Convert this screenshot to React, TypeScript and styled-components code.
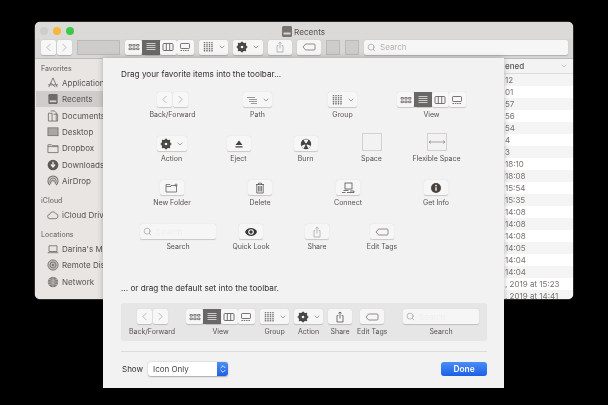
import type { ReactNode } from 'react';
import { ChevronDown, ChevronLeft, ChevronRight, ChevronsUpDown, Search as SearchGlyph } from 'lucide-react';
import styled, { createGlobalStyle } from 'styled-components';

const GlobalStyle = createGlobalStyle`
	html, body {
		margin: 0;
		background: #000;
	}
	body {
		font-family: Inter, "Liberation Sans", sans-serif;
	}
`;

const ink = '#55524f';

const Glyph = ({ size = 12, children }: { size?: number; children: ReactNode }) => (
	<svg width={size} height={size} viewBox="0 0 12 12" fill="none" stroke={ink} strokeWidth="0.8">
		{children}
	</svg>
);

const IconsGrid = () => (
	<Glyph>
		<path d="M1 3.5h2.4v1.6H1zM4.8 3.5h2.4v1.6H4.8zM8.6 3.5H11v1.6H8.6zM1 7h2.4v1.6H1zM4.8 7h2.4v1.6H4.8zM8.6 7H11v1.6H8.6z" strokeWidth="0.7" />
	</Glyph>
);
const ListLines = ({ light }: { light?: boolean }) => (
	<svg width="12" height="12" viewBox="0 0 12 12" fill="none" stroke={light ? '#e6e6e6' : ink} strokeWidth="0.8">
		<path d="M1.5 2.5h9M1.5 4.5h9M1.5 6.5h9M1.5 8.5h9" />
	</svg>
);
const ColumnsIcon = () => (
	<Glyph>
		<rect x="1" y="2.5" width="10" height="7" rx="1" />
		<path d="M4.3 2.5v7M7.7 2.5v7" />
	</Glyph>
);
const GalleryIcon = () => (
	<Glyph>
		<rect x="1.5" y="2.5" width="9" height="5" rx="0.8" />
		<path d="M1.5 9.5h9" strokeDasharray="1.5 0.8" />
	</Glyph>
);
const GroupIcon = () => (
	<svg width="12" height="12" viewBox="0 0 12 12" fill="none" stroke="#77736f" strokeWidth="1.4" strokeDasharray="1.3 0.6">
		<path d="M2.5 1v10M5 1v10M7.5 1v10M10 1v10" />
	</svg>
);
const GearIcon = () => (
	<svg width="12" height="12" viewBox="0 0 12 12">
		<circle cx="6" cy="6" r="3.6" fill="none" stroke="#45423f" strokeWidth="2" />
		<path d="M6 .7v10.6M.7 6h10.6M2.2 2.2l7.6 7.6M9.8 2.2l-7.6 7.6" stroke="#45423f" strokeWidth="1.7" />
		<circle cx="6" cy="6" r="1.3" fill="#f6f6f6" />
	</svg>
);
const ShareIcon = ({ faint }: { faint?: boolean }) => (
	<svg width="12" height="12" viewBox="0 0 12 12" fill="none" stroke={faint ? '#aaa8a6' : ink} strokeWidth="0.8">
		<path d="M4.3 4.5H3v6.5h6V4.5H7.7M6 7.5V1M4.4 2.5 6 1l1.6 1.5" />
	</svg>
);
const TagIcon = () => (
	<svg width="14" height="10" viewBox="0 0 14 10" fill="none" stroke="#77736f" strokeWidth="0.8">
		<path d="M1 5l2.6-3H12a1 1 0 0 1 1 1v4a1 1 0 0 1-1 1H3.6z" />
	</svg>
);
const EjectIcon = () => (
	<svg width="12" height="12" viewBox="0 0 12 12" fill="#45423f">
		<path d="M6 2.5 9.5 7h-7zM2.5 8.2h7v1.2h-7z" />
	</svg>
);
const BurnIcon = () => (
	<svg width="12" height="12" viewBox="0 0 12 12">
		<circle cx="6" cy="6" r="5.2" fill="#45423f" />
		<path d="M6 6 3.3 1.6h5.4zM6 6 1 8l2.6 2.8zM6 6l5 2-2.6 2.8z" fill="#f6f6f6" />
		<circle cx="6" cy="6" r="1" fill="#45423f" />
	</svg>
);
const NewFolderIcon = () => (
	<svg width="14" height="12" viewBox="0 0 14 12" fill="none" stroke="#66625f" strokeWidth="0.8">
		<path d="M1 2.5h4l1 1h5.5v6.5H1zM1 4.5h5M11 1.5v3M9.5 3h3" />
	</svg>
);
const TrashIcon = () => (
	<Glyph>
		<path d="M2 2.5h8M4.5 2.5V1.2h3v1.3M2.8 2.5V11h6.4V2.5M4.6 4v5.5M6 4v5.5M7.4 4v5.5" />
	</Glyph>
);
const ConnectIcon = () => (
	<svg width="14" height="12" viewBox="0 0 14 12" fill="none" stroke="#55524f" strokeWidth="0.8">
		<rect x="4" y="1" width="7" height="6" />
		<path d="M2.5 8.5h5M1 10.5h3.5M9 9h4v1.5H6" />
	</svg>
);
const InfoIcon = () => (
	<svg width="12" height="12" viewBox="0 0 12 12">
		<circle cx="6" cy="6" r="5" fill="#45423f" />
		<path d="M5.3 5.2h1.4v3.6H5.3z" fill="#f6f6f6" />
		<circle cx="6" cy="3.6" r="0.9" fill="#f6f6f6" />
	</svg>
);
const EyeIcon = () => (
	<svg width="14" height="10" viewBox="0 0 14 10">
		<path d="M1 5c2-5.3 10-5.3 12 0-2 5.3-10 5.3-12 0z" fill="#3a3836" />
		<circle cx="7" cy="5" r="2.8" fill="#f6f6f6" />
		<circle cx="7" cy="5" r="1.7" fill="#3a3836" />
	</svg>
);
const PathIcon = () => (
	<svg width="12" height="12" viewBox="0 0 12 12" fill="none" stroke="#77736f" strokeWidth="0.7">
		<path d="M1 3.5h8M3 5.5h8M3 7.5h8M5 9.5h6" />
	</svg>
);

const sideStroke = { fill: 'none', stroke: '#6e6b68', strokeWidth: 0.9 };
const SideIcon = ({ children }: { children: ReactNode }) => (
	<SideIconSvg width="12" height="12" viewBox="0 0 13 13">
		{children}
	</SideIconSvg>
);

const sidebarIcons: Record<string, ReactNode> = {
	apps: <path d="M6.5 1 2 11M6.5 1l4.5 10M1 8.5h11M4 6l5 5" {...sideStroke} />,
	recents: (
		<>
			<rect x="1.5" y="1" width="10" height="11" rx="1.5" fill="#6e6b68" />
			<rect x="3" y="8" width="7" height="2" fill="#d2d0ce" />
		</>
	),
	documents: <path d="M1.5 3.5h4v8.5h-4zM4 1h4l2 2v9H5.5M7 4.5h4.5V12H10" {...sideStroke} />,
	desktop: (
		<>
			<rect x="1" y="2" width="11" height="8.5" fill="#a9a6a4" stroke="#6e6b68" strokeWidth="0.8" />
		</>
	),
	folder: <path d="M1 3h4l1 1h6v7.5H1zM1 5h11" {...sideStroke} />,
	downloads: (
		<>
			<circle cx="6.5" cy="6.5" r="5.8" fill="#5c5956" />
			<path d="M6.5 3v5M4.3 6l2.2 2.6L8.7 6" fill="none" stroke="#f0eeec" strokeWidth="1.4" />
		</>
	),
	airdrop: <path d="M3.3 11a5.5 5.5 0 1 1 6.4 0M4.4 9.3a3.4 3.4 0 1 1 4.2 0M5.6 7.8a1.4 1.4 0 1 1 1.8 0" {...sideStroke} strokeWidth={1.1} />,
	cloud: <path d="M3.2 10.5a2.4 2.4 0 0 1-.2-4.8 3.4 3.4 0 0 1 6.4-.7 2.8 2.8 0 0 1 .4 5.5z" {...sideStroke} />,
	laptop: <path d="M2.2 3h8.6v6.2H2.2zM.8 10.5h11.4" {...sideStroke} />,
	disc: (
		<>
			<circle cx="6.5" cy="6.5" r="5.6" fill="#bdbab8" stroke="#6e6b68" strokeWidth="0.8" />
			<circle cx="6.5" cy="6.5" r="3.2" {...sideStroke} />
			<circle cx="6.5" cy="6.5" r="1.2" fill="#6e6b68" />
		</>
	),
	globe: (
		<>
			<circle cx="6.5" cy="6.5" r="5.6" fill="#807d7a" />
			<path d="M6.5 1v11M1 6.5h11M2 3.5c3 1.4 6 1.4 9 0M2 9.5c3-1.4 6-1.4 9 0" fill="none" stroke="#dcdad8" strokeWidth="0.6" />
		</>
	),
};

type TSideEntry = { kind: 'section' | 'item'; label: string; icon?: string; selected?: boolean };

const sidebar: TSideEntry[] = [
	{ kind: 'section', label: 'Favorites' },
	{ kind: 'item', label: 'Applications', icon: 'apps' },
	{ kind: 'item', label: 'Recents', icon: 'recents', selected: true },
	{ kind: 'item', label: 'Documents', icon: 'documents' },
	{ kind: 'item', label: 'Desktop', icon: 'desktop' },
	{ kind: 'item', label: 'Dropbox', icon: 'folder' },
	{ kind: 'item', label: 'Downloads', icon: 'downloads' },
	{ kind: 'item', label: 'AirDrop', icon: 'airdrop' },
	{ kind: 'section', label: 'iCloud' },
	{ kind: 'item', label: 'iCloud Drive', icon: 'cloud' },
	{ kind: 'section', label: 'Locations' },
	{ kind: 'item', label: "Darina's Mac", icon: 'laptop' },
	{ kind: 'item', label: 'Remote Disc', icon: 'disc' },
	{ kind: 'item', label: 'Network', icon: 'globe' },
];

const dateRows = ['12', '01', '57', '56', '54', '4', '3', '18:10', '18:08', '15:54', '15:35', '14:08', '14:08', '14:08', '14:05', '14:04', '14:04', ', 2019 at 15:23', ', 2019 at 14:41'];

const BackForward = () => (
	<Split $gap={1}>
		<Segment $width={15}>
			<ChevronLeft size={13} strokeWidth={1} color="#8a8785" />
		</Segment>
		<Segment $width={15}>
			<ChevronRight size={13} strokeWidth={1} color="#8a8785" />
		</Segment>
	</Split>
);

const ViewSwitch = () => (
	<Split $gap={0}>
		<Segment $width={17.25}>
			<IconsGrid />
		</Segment>
		<Segment $width={17.25} $active>
			<ListLines light />
		</Segment>
		<Segment $width={17.25}>
			<ColumnsIcon />
		</Segment>
		<Segment $width={17.25}>
			<GalleryIcon />
		</Segment>
	</Split>
);

const Menu = ({ width, children }: { width: number; children: ReactNode }) => (
	<ToolButton $width={width}>
		{children}
		<ChevronDown size={8} strokeWidth={1.6} color="#55524f" />
	</ToolButton>
);

const SearchField = ({ width, faint }: { width?: number; faint?: boolean }) => (
	<SearchBox $width={width}>
		<SearchGlyph size={9} strokeWidth={1.2} color="#77736f" />
		<SearchText $faint={faint}>Search</SearchText>
	</SearchBox>
);

const PaletteItem = ({ label, children }: { label: string; children: ReactNode }) => (
	<Item>
		<ItemSlot>{children}</ItemSlot>
		<ItemLabel>{label}</ItemLabel>
	</Item>
);

const Icon = ({ width = 24, children }: { width?: number; children: ReactNode }) => (
	<ToolButton $width={width}>{children}</ToolButton>
);

export default function App() {
	return (
		<Stage>
			<GlobalStyle />
			<Window>
				<TitleBar>
					<Lights>
						<Light $color="#cfcdcb" />
						<Light $color="#f5b83d" />
						<Light $color="#3ec84a" />
					</Lights>
					<Title>
						<svg width="10" height="11" viewBox="0 0 10 11">
							<rect width="10" height="11" rx="1.5" fill="#77736f" />
							<rect x="1.5" y="6.5" width="7" height="2" fill="#d8d6d4" />
						</svg>
						<span>Recents</span>
					</Title>
				</TitleBar>
				<Toolbar>
					<BackForward />
					<PlaceholderButton $width={43} />
					<ViewSwitch />
					<Menu width={29}>
						<GroupIcon />
					</Menu>
					<Menu width={30}>
						<GearIcon />
					</Menu>
					<Icon>
						<ShareIcon faint />
					</Icon>
					<Icon>
						<TagIcon />
					</Icon>
					<PlaceholderButton $width={14} />
					<PlaceholderButton $width={14} />
					<SearchField />
				</Toolbar>
				<Body>
					<Sidebar>
						{sidebar.map((entry) =>
							entry.kind === 'section' ? (
								<SectionLabel key={entry.label}>{entry.label}</SectionLabel>
							) : (
								<SideRow key={entry.label} $selected={entry.selected}>
									<SideIcon>{sidebarIcons[entry.icon as string]}</SideIcon>
									<span>{entry.label}</span>
								</SideRow>
							),
						)}
					</Sidebar>
					<ListPane>
						<ListHeader>
							<span>ened</span>
							<ChevronDown size={8} strokeWidth={1.2} color="#8a8785" />
						</ListHeader>
						{dateRows.map((text, index) => (
							<ListRow key={index} $striped={index % 2 === 0}>
								{text}
							</ListRow>
						))}
					</ListPane>
				</Body>
			</Window>

			<Sheet>
				<Heading>Drag your favorite items into the toolbar...</Heading>
				<Palette>
					<PaletteRow $columns="85px 85px 85px 93px" $left={27}>
						<PaletteItem label="Back/Forward">
							<BackForward />
						</PaletteItem>
						<PaletteItem label="Path">
							<Menu width={29}>
								<PathIcon />
							</Menu>
						</PaletteItem>
						<PaletteItem label="Group">
							<Menu width={29}>
								<GroupIcon />
							</Menu>
						</PaletteItem>
						<PaletteItem label="View">
							<ViewSwitch />
						</PaletteItem>
					</PaletteRow>
					<PaletteRow $columns="67px 67px 67px 65px 65px" $left={35}>
						<PaletteItem label="Action">
							<Menu width={30}>
								<GearIcon />
							</Menu>
						</PaletteItem>
						<PaletteItem label="Eject">
							<Icon>
								<EjectIcon />
							</Icon>
						</PaletteItem>
						<PaletteItem label="Burn">
							<Icon>
								<BurnIcon />
							</Icon>
						</PaletteItem>
						<PaletteItem label="Space">
							<SpaceBox />
						</PaletteItem>
						<PaletteItem label="Flexible Space">
							<SpaceBox>
								<svg width="16" height="6" viewBox="0 0 16 6" fill="none" stroke="#8a8785" strokeWidth="0.7">
									<path d="M0 3h16M0 3l2-1.5M0 3l2 1.5M16 3l-2-1.5M16 3l-2 1.5" />
								</svg>
							</SpaceBox>
						</PaletteItem>
					</PaletteRow>
					<PaletteRow $columns="88px 88px 88px 88px" $left={25}>
						<PaletteItem label="New Folder">
							<Icon>
								<NewFolderIcon />
							</Icon>
						</PaletteItem>
						<PaletteItem label="Delete">
							<Icon>
								<TrashIcon />
							</Icon>
						</PaletteItem>
						<PaletteItem label="Connect">
							<Icon>
								<ConnectIcon />
							</Icon>
						</PaletteItem>
						<PaletteItem label="Get Info">
							<Icon>
								<InfoIcon />
							</Icon>
						</PaletteItem>
					</PaletteRow>
					<PaletteRow $columns="76px 70px 62px 68px" $left={37}>
						<PaletteItem label="Search">
							<SearchField width={76} faint />
						</PaletteItem>
						<PaletteItem label="Quick Look">
							<Icon>
								<EyeIcon />
							</Icon>
						</PaletteItem>
						<PaletteItem label="Share">
							<Icon>
								<ShareIcon faint />
							</Icon>
						</PaletteItem>
						<PaletteItem label="Edit Tags">
							<Icon>
								<TagIcon />
							</Icon>
						</PaletteItem>
					</PaletteRow>
				</Palette>

				<Heading>... or drag the default set into the toolbar.</Heading>
				<DefaultSet>
					<PaletteItem label="Back/Forward">
						<BackForward />
					</PaletteItem>
					<PaletteItem label="View">
						<ViewSwitch />
					</PaletteItem>
					<PaletteItem label="Group">
						<Menu width={29}>
							<GroupIcon />
						</Menu>
					</PaletteItem>
					<PaletteItem label="Action">
						<Menu width={29}>
							<GearIcon />
						</Menu>
					</PaletteItem>
					<PaletteItem label="Share">
						<Icon>
							<ShareIcon />
						</Icon>
					</PaletteItem>
					<PaletteItem label="Edit Tags">
						<Icon>
							<TagIcon />
						</Icon>
					</PaletteItem>
					<SearchSlot>
						<PaletteItem label="Search">
							<SearchField width={76} faint />
						</PaletteItem>
					</SearchSlot>
				</DefaultSet>
				<Divider />
				<Footer>
					<ShowLabel>Show</ShowLabel>
					<Select>
						<span>Icon Only</span>
						<SelectArrows>
							<ChevronsUpDown size={10} strokeWidth={2} color="#fff" />
						</SelectArrows>
					</Select>
					<DoneButton>Done</DoneButton>
				</Footer>
			</Sheet>
		</Stage>
	);
}

const Stage = styled.div`
	position: relative;
	width: 608px;
	height: 405px;
	padding: 22px 0 0 35px;
	box-sizing: border-box;
	background: #000;
	overflow: hidden;
	color: #3c3a38;
	filter: blur(0.35px);
`;

const Window = styled.div`
	display: flex;
	flex-direction: column;
	width: 538px;
	height: 277px;
	border-radius: 5px;
	overflow: hidden;
	background: #fff;
	box-shadow: 0 0 0 0.5px #555;
`;

const TitleBar = styled.div`
	position: relative;
	display: flex;
	align-items: center;
	flex-shrink: 0;
	height: 16px;
	padding: 1px 6px 0 5px;
	background: #dbdad9;
`;

const Lights = styled.div`
	display: flex;
	gap: 5px;
`;

const Light = styled.div<{ $color: string }>`
	width: 8px;
	height: 8px;
	border-radius: 50%;
	background: ${(p) => p.$color};
`;

const Title = styled.div`
	display: flex;
	align-items: center;
	gap: 2px;
	margin-left: 208px;
	padding-top: 1px;
	font-size: 8.2px;
	color: #55524f;
`;

const Toolbar = styled.div`
	display: flex;
	align-items: center;
	flex-shrink: 0;
	gap: 5px;
	height: 20px;
	padding: 0 5px 3px 6px;
	box-sizing: border-box;
	background: #d8d7d6;
	border-bottom: 1px solid #bdbcbb;
`;

const Split = styled.div<{ $gap: number }>`
	display: flex;
	flex-shrink: 0;
	gap: ${(p) => p.$gap}px;
	height: 15px;
`;

const Segment = styled.div<{ $width: number; $active?: boolean }>`
	display: flex;
	align-items: center;
	justify-content: center;
	width: ${(p) => p.$width}px;
	border-radius: ${(p) => (p.$active ? 0 : 2)}px;
	background: ${(p) => (p.$active ? '#6a6866' : '#f7f7f7')};
	box-shadow: 0 0.5px 1px rgba(0, 0, 0, 0.18);
`;

const ToolButton = styled.div<{ $width: number }>`
	display: flex;
	align-items: center;
	justify-content: center;
	flex-shrink: 0;
	gap: 4px;
	width: ${(p) => p.$width}px;
	height: 15px;
	border-radius: 2px;
	background: #f6f6f6;
	box-shadow: 0 0.5px 1px rgba(0, 0, 0, 0.18);
`;

const PlaceholderButton = styled.div<{ $width: number }>`
	flex-shrink: 0;
	width: ${(p) => p.$width}px;
	height: 15px;
	box-sizing: border-box;
	border: 1px solid #bcbab8;
	background: #cdcccb;
`;

const SearchBox = styled.div<{ $width?: number }>`
	display: flex;
	align-items: center;
	gap: 4px;
	flex: ${(p) => (p.$width ? 'none' : 1)};
	width: ${(p) => (p.$width ? `${p.$width}px` : 'auto')};
	height: 15px;
	box-sizing: border-box;
	padding-left: 3px;
	border-radius: 2px;
	background: #f6f6f6;
	box-shadow: 0 0.5px 1px rgba(0, 0, 0, 0.18);
`;

const SearchText = styled.span<{ $faint?: boolean }>`
	font-size: 8px;
	color: ${(p) => (p.$faint ? '#eeeeee' : '#b4b2b0')};
`;

const Body = styled.div`
	display: flex;
	flex: 1;
	min-height: 0;
`;

const Sidebar = styled.div`
	display: flex;
	flex-direction: column;
	flex-shrink: 0;
	width: 68px;
	padding-left: 1px;
	box-sizing: border-box;
	overflow: hidden;
	background: #e9e5e3;
`;

const SectionLabel = styled.div`
	flex-shrink: 0;
	height: 11.6px;
	margin: 6px 0 0 5px;
	font-size: 7px;
	line-height: 11.6px;
	font-weight: 500;
	color: #77736f;

	&:first-child {
		margin-top: 4px;
	}
`;

const SideRow = styled.div<{ $selected?: boolean }>`
	display: flex;
	align-items: center;
	gap: 3px;
	flex-shrink: 0;
	height: 16.4px;
	padding-left: 11px;
	font-size: 8px;
	white-space: nowrap;
	color: #55524f;
	background: ${(p) => (p.$selected ? '#cfcdcc' : 'transparent')};
`;

const SideIconSvg = styled.svg`
	flex-shrink: 0;
`;

const ListPane = styled.div`
	flex: 1;
	padding-left: 401px;
	overflow: hidden;
	background: #fff;
	font-size: 8px;
	color: #77736f;
`;

const ListHeader = styled.div`
	display: flex;
	align-items: center;
	justify-content: space-between;
	height: 14px;
	padding: 0 5px 0 1px;
	background: #f3f3f3;
	border-bottom: 1px solid #dcdcdc;
	font-weight: 500;
	color: #55524f;
`;

const ListRow = styled.div<{ $striped: boolean }>`
	height: 12px;
	padding-left: 1px;
	line-height: 12px;
	white-space: nowrap;
	background: ${(p) => (p.$striped ? '#f4f4f4' : '#fff')};
`;

const Sheet = styled.div`
	position: absolute;
	left: 103px;
	top: 58px;
	display: flex;
	flex-direction: column;
	width: 401px;
	height: 330px;
	box-sizing: border-box;
	padding: 10.5px 17px 0 18px;
	background: #f2f2f2;
	box-shadow: 0 0 6px rgba(0, 0, 0, 0.25);
`;

const Heading = styled.div`
	font-size: 8.2px;
	line-height: 11px;
	color: #33312f;
`;

const Palette = styled.div`
	display: flex;
	flex-direction: column;
	gap: 16px;
	margin: 12.5px -17px 0 -18px;
	height: 190.5px;
`;

const PaletteRow = styled.div<{ $columns: string; $left: number }>`
	display: grid;
	grid-template-columns: ${(p) => p.$columns};
	height: 28px;
	padding-left: ${(p) => p.$left}px;
`;

const Item = styled.div`
	display: flex;
	flex-direction: column;
	align-items: center;
`;

const ItemSlot = styled.div`
	display: flex;
	align-items: flex-end;
	height: 15px;
`;

const ItemLabel = styled.div`
	margin-top: 2.5px;
	font-size: 7px;
	line-height: 10px;
	white-space: nowrap;
	color: #55524f;
`;

const SpaceBox = styled.div`
	display: flex;
	align-items: center;
	justify-content: center;
	width: 20px;
	height: 18px;
	box-sizing: border-box;
	border: 1px solid #d2d1d0;
`;

const DefaultSet = styled.div`
	display: flex;
	align-items: flex-start;
	gap: 5px;
	height: 38px;
	margin-top: 9.5px;
	padding: 6px 8px 0;
	box-sizing: border-box;
	border-radius: 2px;
	background: #e6e6e6;

	> :first-child {
		margin-right: 6px;
	}
`;

const SearchSlot = styled.div`
	margin-left: auto;
`;

const Divider = styled.div`
	height: 1px;
	margin-top: 10px;
	background: #dcdcdc;
`;

const Footer = styled.div`
	display: flex;
	align-items: center;
	height: 14px;
	margin-top: 10px;
`;

const ShowLabel = styled.span`
	width: 27px;
	padding-left: 1px;
	box-sizing: border-box;
	font-size: 8px;
	color: #33312f;
`;

const Select = styled.div`
	display: flex;
	align-items: center;
	justify-content: space-between;
	width: 80px;
	height: 14px;
	padding-left: 5px;
	box-sizing: border-box;
	border-radius: 3px;
	overflow: hidden;
	background: #fff;
	box-shadow: 0 0.5px 1.5px rgba(0, 0, 0, 0.3);
	font-size: 8px;
	color: #44423f;
`;

const SelectArrows = styled.div`
	display: flex;
	align-items: center;
	justify-content: center;
	width: 11px;
	height: 14px;
	background: linear-gradient(#4d8ff5, #1f60e0);
`;

const DoneButton = styled.div`
	display: flex;
	align-items: center;
	justify-content: center;
	width: 46px;
	height: 14px;
	margin-left: auto;
	border-radius: 3px;
	background: linear-gradient(#4b8df6, #1c5fe6);
	font-size: 8.4px;
	font-weight: 600;
	color: #fff;
`;
